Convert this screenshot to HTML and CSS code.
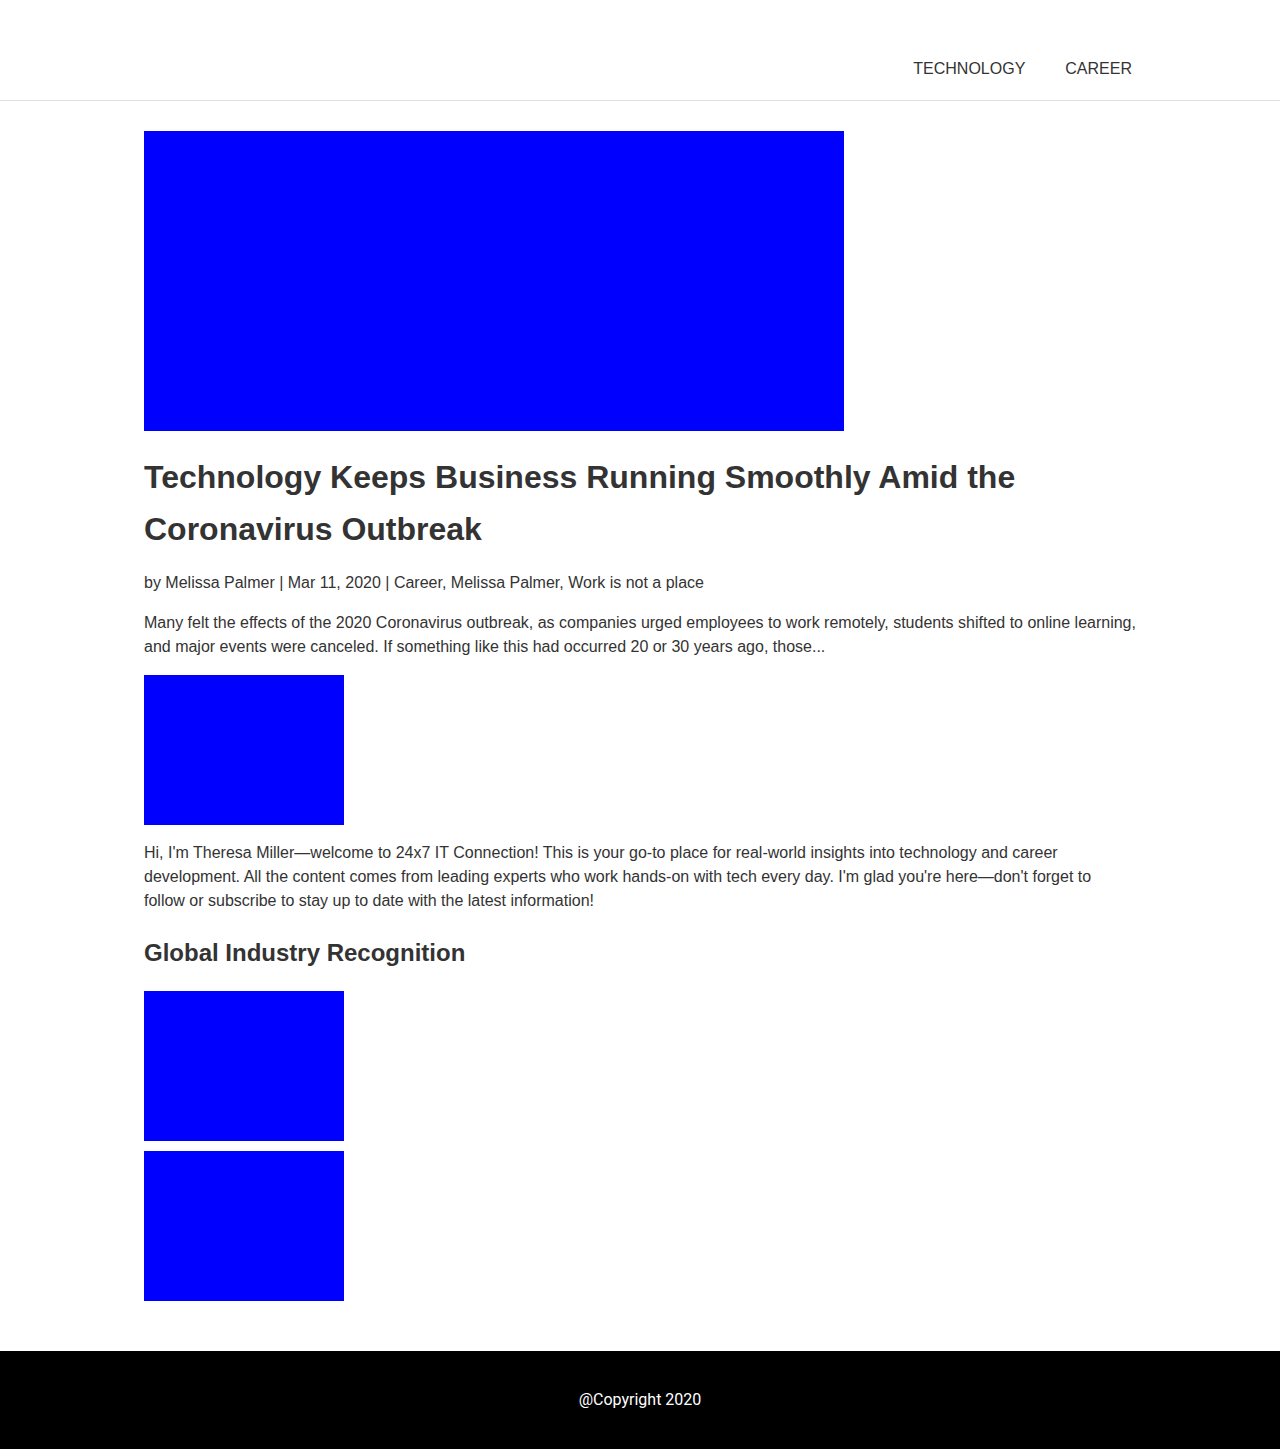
FILE: index.html
```html
<!DOCTYPE html>
<html lang="en">
<head>
<meta charset="utf-8">
<title>24x7 IT Connection</title>
<link rel="stylesheet" href="styles.css">
</head>
<body>
<header class="site-header">
  <div class="container header-inner">
    <nav class="nav">
      <a class="nav-link" href="#">TECHNOLOGY</a>
      <a class="nav-link" href="#">CAREER</a>
    </nav>
  </div>
</header>
<main class="container main">
  <div class="hero-img"></div>
  <h1 class="post-title">Technology Keeps Business Running Smoothly Amid the Coronavirus Outbreak</h1>
  <p class="meta">by Melissa Palmer | Mar 11, 2020 | Career, Melissa Palmer, Work is not a place</p>
  <p class="excerpt">Many felt the effects of the 2020 Coronavirus outbreak, as companies urged employees to work remotely, students shifted to online learning, and major events were canceled. If something like this had occurred 20 or 30 years ago, those...</p>
  <div class="thumb thumb-about"></div>
  <p class="about">Hi, I'm Theresa Miller—welcome to 24x7 IT Connection! This is your go-to place for real-world insights into technology and career development. All the content comes from leading experts who work hands-on with tech every day. I'm glad you're here—don't forget to follow or subscribe to stay up to date with the latest information!</p>
  <h2 class="section-title">Global Industry Recognition</h2>
  <div class="badges">
    <div class="thumb"></div>
    <div class="thumb"></div>
  </div>
</main>
<footer class="site-footer">
  <p class="copyright">@Copyright 2020</p>
</footer>
</body>
</html>
```

FILE: styles.css
```css
* { box-sizing: border-box; }
html, body { margin: 0; padding: 0; }
body {
  font-family: "Liberation Sans", Arial, sans-serif;
  color: #333;
  font-size: 16px;
  line-height: 24px;
  background: #fff;
}
.container {
  width: 992px;
  margin: 0 auto;
}
.site-header {
  height: 101px;
  border-bottom: 1px solid #e0e0e0;
}
.header-inner {
  height: 100%;
  display: flex;
  justify-content: flex-end;
  align-items: flex-end;
  padding-bottom: 19px;
  padding-right: 4px;
}
.nav {
  display: flex;
  gap: 40px;
}
.nav-link {
  color: #333;
  text-decoration: none;
  font-size: 16px;
  line-height: 24px;
}
.main {
  padding-top: 30px;
  padding-bottom: 50px;
}
.hero-img {
  width: 700px;
  height: 300px;
  background: #0000ff;
}
.post-title {
  margin: 20px 0 16px;
  font-size: 32px;
  line-height: 52px;
  font-weight: bold;
}
.meta {
  margin: 0 0 16px;
}
.excerpt {
  margin: 0 0 16px;
}
.thumb {
  width: 200px;
  height: 150px;
  background: #0000ff;
}
.about {
  margin: 16px 0 0;
}
.section-title {
  margin: 24px 0 22px;
  font-size: 24px;
  line-height: 32px;
  font-weight: bold;
}
.badges {
  display: flex;
  flex-direction: column;
  gap: 10px;
}
.site-footer {
  background: #000;
  height: 98px;
  display: flex;
  align-items: center;
  justify-content: center;
}
.copyright {
  margin: 0;
  color: #fff;
  font-family: Roboto, "Liberation Sans", sans-serif;
  font-size: 16px;
  line-height: 24px;
}
```
